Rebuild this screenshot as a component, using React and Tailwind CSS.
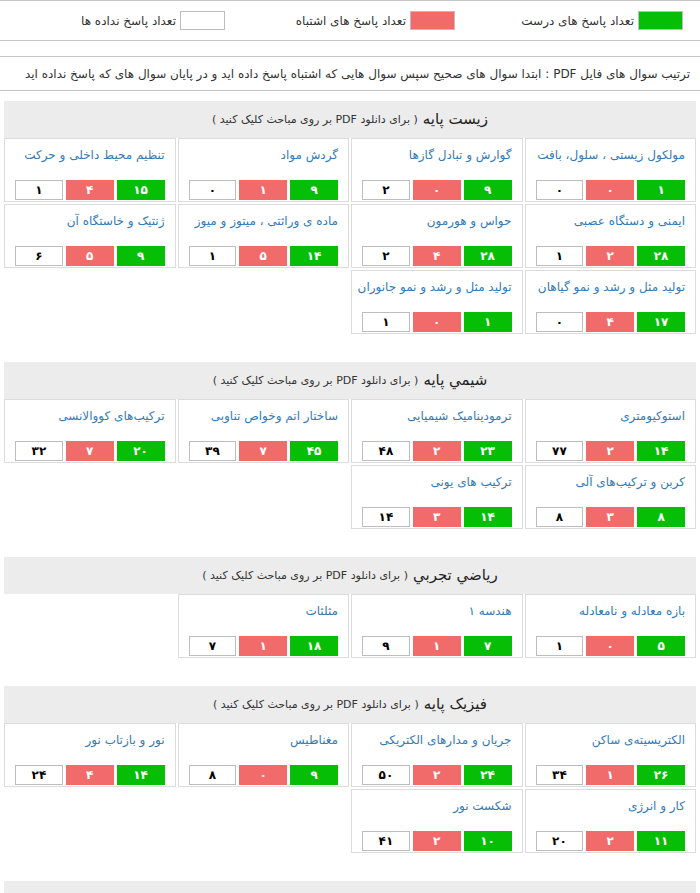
import React from 'react';

const fa = (n) => String(n).replace(/\d/g, (d) => '۰۱۲۳۴۵۶۷۸۹'[d]);

const sections = [
  {
    title: 'زیست پایه',
    items: [
      ['مولکول زیستی ، سلول، بافت', 1, 0, 0],
      ['گوارش و تبادل گازها', 9, 0, 2],
      ['گردش مواد', 9, 1, 0],
      ['تنظیم محیط داخلی و حرکت', 15, 4, 1],
      ['ایمنی و دستگاه عصبی', 28, 2, 1],
      ['حواس و هورمون', 28, 4, 2],
      ['ماده ی وراثتی ، میتوز و میوز', 14, 5, 1],
      ['ژنتیک و خاستگاه آن', 9, 5, 6],
      ['تولید مثل و رشد و نمو گیاهان', 17, 4, 0],
      ['تولید مثل و رشد و نمو جانوران', 1, 0, 1],
    ],
  },
  {
    title: 'شيمي پایه',
    items: [
      ['استوکیومتری', 14, 2, 77],
      ['ترمودینامیک شیمیایی', 23, 2, 48],
      ['ساختار اتم وخواص تناوبی', 45, 7, 39],
      ['ترکیب‌های کووالانسی', 20, 7, 32],
      ['کربن و ترکیب‌های آلی', 8, 3, 8],
      ['ترکیب های یونی', 14, 3, 14],
    ],
  },
  {
    title: 'رياضي تجربي',
    items: [
      ['بازه معادله و نامعادله', 5, 0, 1],
      ['هندسه ۱', 7, 1, 9],
      ['مثلثات', 18, 1, 7],
    ],
  },
  {
    title: 'فیزیک پایه',
    items: [
      ['الکتریسیته‌ی ساکن', 26, 1, 34],
      ['جریان و مدارهای الکتریکی', 24, 2, 50],
      ['مغناطیس', 9, 0, 8],
      ['نور و بازتاب نور', 14, 4, 24],
      ['کار و انرژی', 11, 2, 20],
      ['شکست نور', 10, 2, 41],
    ],
  },
];

function Cell({ name, c, w, n }) {
  return (
    <div className="border border-[#dcdcdc] h-[64px] flex flex-col justify-between pt-[7px] pb-[1px] px-[10px]">
      <div className="text-[12px] leading-[18px] text-[#337ab7] text-right whitespace-nowrap">{name}</div>
      <div className="flex justify-center gap-[3px]">
        <div className="w-[48px] h-[20px] bg-[#07be07] text-white font-bold text-[12px] flex items-center justify-center">{fa(c)}</div>
        <div className="w-[48px] h-[20px] bg-[#f26b6b] text-white font-bold text-[12px] flex items-center justify-center">{fa(w)}</div>
        <div className="w-[48px] h-[20px] bg-white border border-[#bdbdbd] text-black font-bold text-[12px] flex items-center justify-center">{fa(n)}</div>
      </div>
    </div>
  );
}

function Section({ title, items, first }) {
  return (
    <div className={first ? 'mt-[10px]' : 'mt-[28px]'}>
      <div className="h-[37px] bg-[#ececec] flex items-center justify-center gap-[5px]">
        <span className="text-[15px] text-[#222]">{title}</span>
        <span className="text-[11px] text-[#333] pt-[2px]">( برای دانلود PDF بر روی مباحث کلیک کنید )</span>
      </div>
      <div className="grid grid-cols-4 gap-[2px]">
        {items.map((it, i) => (
          <Cell key={i} name={it[0]} c={it[1]} w={it[2]} n={it[3]} />
        ))}
      </div>
    </div>
  );
}

export default function App() {
  return (
    <div dir="rtl" className="w-[700px] h-[893px] overflow-hidden bg-white text-[#333]" style={{ fontFamily: '"DejaVu Sans", sans-serif' }}>
      <div className="border-t border-b border-[#c4c4c4] h-[41px] flex items-center pr-[17px] text-[12px]">
        <div className="w-[228px] flex items-center gap-[4px]">
          <div className="w-[45px] h-[19px] bg-[#07be07] border border-[#bdbdbd]" />
          <span>تعداد پاسخ های درست</span>
        </div>
        <div className="w-[230px] flex items-center gap-[4px]">
          <div className="w-[45px] h-[19px] bg-[#f26b6b] border border-[#bdbdbd]" />
          <span>تعداد پاسخ های اشتباه</span>
        </div>
        <div className="flex items-center gap-[4px]">
          <div className="w-[45px] h-[19px] bg-white border border-[#bdbdbd]" />
          <span>تعداد پاسخ نداده ها</span>
        </div>
      </div>
      <div className="mt-[15px] border-t border-b border-[#c4c4c4] h-[35px] flex items-center pr-[10px] text-[12px] whitespace-nowrap">
        ترتیب سوال های فایل PDF : ابتدا سوال های صحیح سپس سوال هایی که اشتباه پاسخ داده اید و در پایان سوال های که پاسخ نداده اید
      </div>
      <div className="mx-[4px]">
        {sections.map((s, i) => (
          <Section key={i} title={s.title} items={s.items} first={i === 0} />
        ))}
        <div className="mt-[28px] h-[37px] bg-[#ececec]" />
      </div>
    </div>
  );
}
